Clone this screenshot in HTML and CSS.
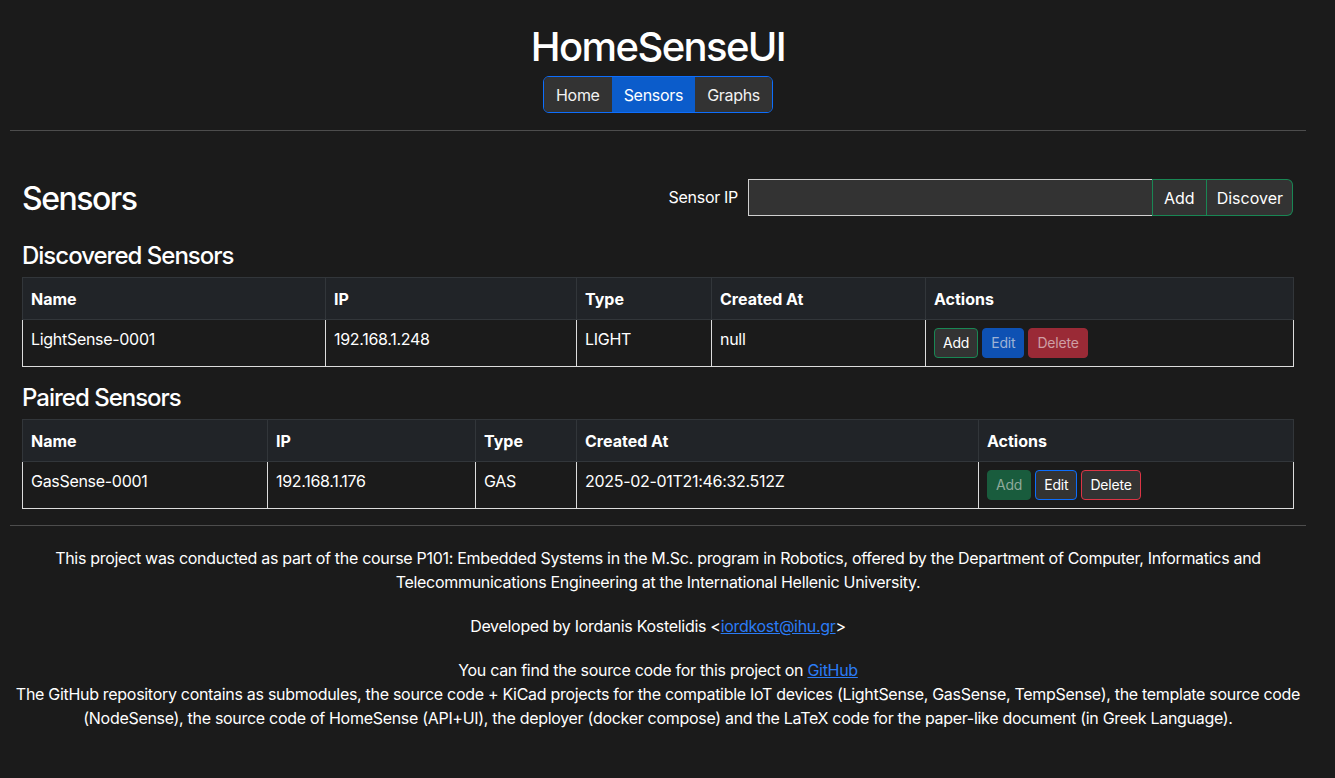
FILE: index.html
```html
<!DOCTYPE html>
<html lang="en">
<head>
<meta charset="utf-8">
<title>HomeSenseUI</title>
<link rel="stylesheet" href="styles.css">
</head>
<body>
<div class="page">
  <header class="top">
    <h1 class="title">HomeSenseUI</h1>
    <nav class="nav">
      <a class="nav-btn">Home</a>
      <a class="nav-btn active">Sensors</a>
      <a class="nav-btn">Graphs</a>
    </nav>
  </header>
  <hr class="rule rule-top">
  <main class="content">
    <div class="head-row">
      <h2 class="h2">Sensors</h2>
      <div class="ip-form">
        <label class="ip-label">Sensor IP</label>
        <div class="input-group">
          <input class="ip-input" type="text">
          <button class="ig-btn">Add</button>
          <button class="ig-btn last">Discover</button>
        </div>
      </div>
    </div>

    <h3 class="h3 first">Discovered Sensors</h3>
    <table class="tbl">
      <colgroup>
        <col style="width:304px"><col style="width:251px"><col style="width:135px"><col style="width:214px"><col style="width:368px">
      </colgroup>
      <thead>
        <tr><th>Name</th><th>IP</th><th>Type</th><th>Created At</th><th>Actions</th></tr>
      </thead>
      <tbody>
        <tr>
          <td>LightSense-0001</td><td>192.168.1.248</td><td>LIGHT</td><td>null</td>
          <td><div class="actions"><button class="btn b-add-outline">Add</button><button class="btn b-edit-solid">Edit</button><button class="btn b-del-solid">Delete</button></div></td>
        </tr>
      </tbody>
    </table>

    <h3 class="h3">Paired Sensors</h3>
    <table class="tbl">
      <colgroup>
        <col style="width:246px"><col style="width:208px"><col style="width:101px"><col style="width:402px"><col style="width:315px">
      </colgroup>
      <thead>
        <tr><th>Name</th><th>IP</th><th>Type</th><th>Created At</th><th>Actions</th></tr>
      </thead>
      <tbody>
        <tr>
          <td>GasSense-0001</td><td>192.168.1.176</td><td>GAS</td><td>2025-02-01T21:46:32.512Z</td>
          <td><div class="actions"><button class="btn b-add-solid">Add</button><button class="btn b-edit-outline">Edit</button><button class="btn b-del-outline">Delete</button></div></td>
        </tr>
      </tbody>
    </table>
  </main>
  <hr class="rule rule-bottom">
  <footer class="footer">
    <p>This project was conducted as part of the course P101: Embedded Systems in the M.Sc. program in Robotics, offered by the Department of Computer, Informatics and Telecommunications Engineering at the International Hellenic University.</p>
    <p>Developed by Iordanis Kostelidis &lt;<a class="link" href="#">iordkost@ihu.gr</a>&gt;</p>
    <p>You can find the source code for this project on <a class="link" href="#">GitHub</a><br>The GitHub repository contains as submodules, the source code + KiCad projects for the compatible IoT devices (LightSense, GasSense, TempSense), the template source code (NodeSense), the source code of HomeSense (API+UI), the deployer (docker compose) and the LaTeX code for the paper-like document (in Greek Language).</p>
  </footer>
</div>
</body>
</html>
```

FILE: styles.css
```css
* { box-sizing: border-box; }
html, body {
  margin: 0;
  padding: 0;
  background: #1b1b1b;
  color: #ffffff;
  font-family: "Inter", "Liberation Sans", sans-serif;
  font-size: 16px;
  line-height: 24px;
  letter-spacing: -0.3px;
}
.page {
  width: 1296px;
  margin-left: 10px;
}
.top {
  display: flex;
  flex-direction: column;
  align-items: center;
  padding-top: 23px;
}
.title {
  margin: 0 0 5px 0;
  font-size: 40px;
  line-height: 48px;
  font-weight: 500;
  letter-spacing: -1.6px;
}
.nav {
  display: flex;
  border: 1px solid #0d6efd;
  border-radius: 6px;
  overflow: hidden;
  height: 37px;
}
.nav-btn {
  display: flex;
  align-items: center;
  padding: 0 12px;
  background: #333333;
  color: #f2f2f2;
  font-size: 16px;
}
.nav-btn.active {
  background: #0b5ccb;
  color: #ffffff;
}
.rule {
  border: 0;
  height: 1px;
  background: #4d4d4d;
  margin: 0;
}
.rule-top { margin-top: 17px; }
.content {
  padding: 48px 12px 0 12px;
}
.head-row {
  display: flex;
  justify-content: space-between;
  align-items: center;
  height: 37px;
}
.h2 {
  margin: 0;
  font-size: 32px;
  line-height: 38px;
  font-weight: 500;
  letter-spacing: -1.5px;
  position: relative;
  top: 1px;
}
.ip-form {
  display: flex;
  align-items: center;
  gap: 10px;
  margin-right: 1px;
}
.ip-label {
  font-size: 16px;
  position: relative;
  top: -1px;
}
.input-group {
  display: flex;
  height: 37px;
}
.ip-input {
  width: 404px;
  height: 37px;
  background: #333333;
  border: 1px solid #d0d0d0;
  border-right: 0;
  margin: 0;
  color: #fff;
  font: inherit;
  outline: none;
}
.ig-btn {
  height: 37px;
  background: #333333;
  border: 1px solid #198754;
  color: #ffffff;
  font: inherit;
  font-size: 16px;
  padding: 0 11px;
  margin: 0;
}
.ig-btn.last {
  border-left: 0;
  border-radius: 0 6px 6px 0;
  padding: 0 9px 0 10px;
}
.h3 {
  margin: 0 0 7px 0;
  font-size: 24px;
  line-height: 29px;
  font-weight: 500;
  letter-spacing: -1px;
  padding-top: 16px;
}
.h3.first { padding-top: 25px; }
.tbl {
  width: 1272px;
  table-layout: fixed;
  border-collapse: separate;
  border-spacing: 0;
}
.tbl th {
  background: #212428;
  border-top: 1px solid #32363a;
  border-right: 1px solid #32363a;
  border-bottom: 1px solid #32363a;
  text-align: left;
  font-weight: 700;
  letter-spacing: 0;
  padding: 8px;
  height: 43px;
}
.tbl th:first-child { border-left: 1px solid #32363a; }
.tbl td {
  border-right: 1px solid #dcdcdc;
  border-bottom: 1px solid #dcdcdc;
  padding: 7px 8px 8px 8px;
  vertical-align: top;
  height: 47px;
}
.tbl td:first-child { border-left: 1px solid #dcdcdc; }
.actions {
  display: flex;
  gap: 4px;
  padding-top: 1px;
}
.btn {
  height: 30px;
  padding: 0 8px;
  font: inherit;
  font-size: 14px;
  letter-spacing: -0.2px;
  border-radius: 4px;
  border: 1px solid transparent;
  margin: 0;
}
.b-add-outline { background: #333333; border-color: #198754; color: #ffffff; }
.b-edit-solid { background: #0e51b3; border-color: #0e51b3; color: #9eb3d6; }
.b-del-solid { background: #9a2a36; border-color: #9a2a36; color: #cf9ea4; }
.b-add-solid { background: #195c3d; border-color: #195c3d; color: #8faa9b; }
.b-edit-outline { background: #333333; border-color: #0d6efd; color: #ffffff; }
.b-del-outline { background: #333333; border-color: #dc3545; color: #ffffff; }
.rule-bottom { margin-top: 16px; }
.footer {
  text-align: center;
  padding-top: 20px;
}
.footer p {
  margin: 0 0 20px 0;
}
.link {
  color: #2b7bf5;
  text-decoration: underline;
}
```
